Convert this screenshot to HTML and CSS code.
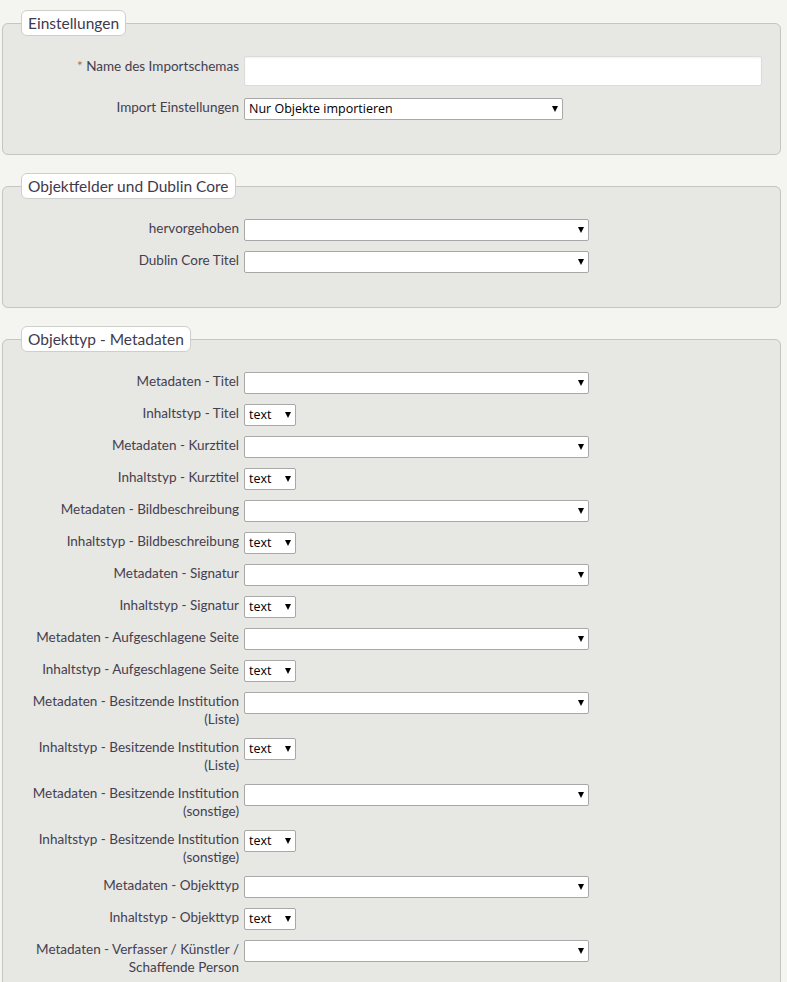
FILE: index.html
```html
<!DOCTYPE html>
<html lang="de">
<head>
<meta charset="utf-8">
<title>Importschema</title>
<link rel="stylesheet" href="styles.css">
</head>
<body>
<form class="form">
  <fieldset class="group">
    <legend class="legend">Einstellungen</legend>
    <div class="row row-input">
      <label class="lbl lbl-input"><span class="req">*</span> Name des Importschemas</label>
      <input class="text-input" type="text">
    </div>
    <div class="row">
      <label class="lbl">Import Einstellungen</label>
      <span class="sel sel-mid"><select><option>Nur Objekte importieren</option></select></span>
    </div>
  </fieldset>

  <fieldset class="group">
    <legend class="legend">Objektfelder und Dublin Core</legend>
    <div class="row">
      <label class="lbl">hervorgehoben</label>
      <span class="sel sel-wide"><select><option></option></select></span>
    </div>
    <div class="row">
      <label class="lbl">Dublin Core Titel</label>
      <span class="sel sel-wide"><select><option></option></select></span>
    </div>
  </fieldset>

  <fieldset class="group">
    <legend class="legend">Objekttyp - Metadaten</legend>
    <div class="row"><label class="lbl">Metadaten - Titel</label><span class="sel sel-wide"><select><option></option></select></span></div>
    <div class="row"><label class="lbl">Inhaltstyp - Titel</label><span class="sel sel-small"><select><option>text</option></select></span></div>
    <div class="row"><label class="lbl">Metadaten - Kurztitel</label><span class="sel sel-wide"><select><option></option></select></span></div>
    <div class="row"><label class="lbl">Inhaltstyp - Kurztitel</label><span class="sel sel-small"><select><option>text</option></select></span></div>
    <div class="row"><label class="lbl">Metadaten - Bildbeschreibung</label><span class="sel sel-wide"><select><option></option></select></span></div>
    <div class="row"><label class="lbl">Inhaltstyp - Bildbeschreibung</label><span class="sel sel-small"><select><option>text</option></select></span></div>
    <div class="row"><label class="lbl">Metadaten - Signatur</label><span class="sel sel-wide"><select><option></option></select></span></div>
    <div class="row"><label class="lbl">Inhaltstyp - Signatur</label><span class="sel sel-small"><select><option>text</option></select></span></div>
    <div class="row"><label class="lbl">Metadaten - Aufgeschlagene Seite</label><span class="sel sel-wide"><select><option></option></select></span></div>
    <div class="row"><label class="lbl">Inhaltstyp - Aufgeschlagene Seite</label><span class="sel sel-small"><select><option>text</option></select></span></div>
    <div class="row"><label class="lbl">Metadaten - Besitzende Institution<br>(Liste)</label><span class="sel sel-wide"><select><option></option></select></span></div>
    <div class="row"><label class="lbl">Inhaltstyp - Besitzende Institution<br>(Liste)</label><span class="sel sel-small"><select><option>text</option></select></span></div>
    <div class="row"><label class="lbl">Metadaten - Besitzende Institution<br>(sonstige)</label><span class="sel sel-wide"><select><option></option></select></span></div>
    <div class="row"><label class="lbl">Inhaltstyp - Besitzende Institution<br>(sonstige)</label><span class="sel sel-small"><select><option>text</option></select></span></div>
    <div class="row"><label class="lbl">Metadaten - Objekttyp</label><span class="sel sel-wide"><select><option></option></select></span></div>
    <div class="row"><label class="lbl">Inhaltstyp - Objekttyp</label><span class="sel sel-small"><select><option>text</option></select></span></div>
    <div class="row"><label class="lbl">Metadaten - Verfasser / Künstler /<br>Schaffende Person</label><span class="sel sel-wide"><select><option></option></select></span></div>
    <div class="row"><label class="lbl">Inhaltstyp - Verfasser / Künstler /<br>Schaffende Person</label><span class="sel sel-small"><select><option>text</option></select></span></div>
  </fieldset>
</form>
</body>
</html>
```

FILE: styles.css
```css
html, body {
  margin: 0;
  padding: 0;
}

body {
  background: #f4f4f0;
  font-family: Lato, "Open Sans", sans-serif;
  font-size: 13.5px;
  color: #45404f;
}

.form {
  padding: 10px 6px 0 2px;
}

.group {
  margin: 0 0 18px 0;
  padding: 20px 0 24px 0;
  background: #e7e7e3;
  border: 1px solid #c6c6c1;
  border-radius: 6px;
  min-width: 0;
}

.legend {
  margin-left: 18px;
  padding: 0 6px;
  background: #ffffff;
  border: 1px solid #cfcfca;
  border-radius: 6px;
  font-size: 15.5px;
  line-height: 24px;
  color: #3f3a4c;
}

.row {
  display: flex;
  align-items: flex-start;
  gap: 5px;
  margin-bottom: 10px;
}

.row-input {
  margin-bottom: 12px;
}

.lbl {
  flex: 0 0 236px;
  width: 236px;
  text-align: right;
  line-height: 18px;
}

.lbl-input {
  padding-top: 1px;
}

.req {
  color: #b86a2a;
}

.text-input {
  box-sizing: border-box;
  width: 518px;
  height: 30px;
  margin: 0;
  border: 1px solid #dcdcd8;
  border-radius: 2px;
  background: #ffffff;
  box-shadow: inset 0 1px 2px rgba(0, 0, 0, 0.06);
}

.sel {
  position: relative;
  display: block;
  height: 22px;
}

.sel select {
  appearance: none;
  -webkit-appearance: none;
  box-sizing: border-box;
  width: 100%;
  height: 22px;
  margin: 0;
  padding: 0 14px 0 4px;
  border: 1px solid #a8a8a8;
  border-radius: 2px;
  background: #ffffff;
  font-family: "Open Sans", "Liberation Sans", sans-serif;
  font-size: 12.5px;
  color: #000000;
  line-height: 20px;
}

.sel::after {
  content: "";
  position: absolute;
  right: 5px;
  top: 8px;
  width: 0;
  height: 0;
  border-left: 3.5px solid transparent;
  border-right: 3.5px solid transparent;
  border-top: 6px solid #000000;
  pointer-events: none;
}

.sel-wide {
  width: 345px;
}

.sel-mid {
  width: 319px;
}

.sel-small {
  width: 52px;
}
```
